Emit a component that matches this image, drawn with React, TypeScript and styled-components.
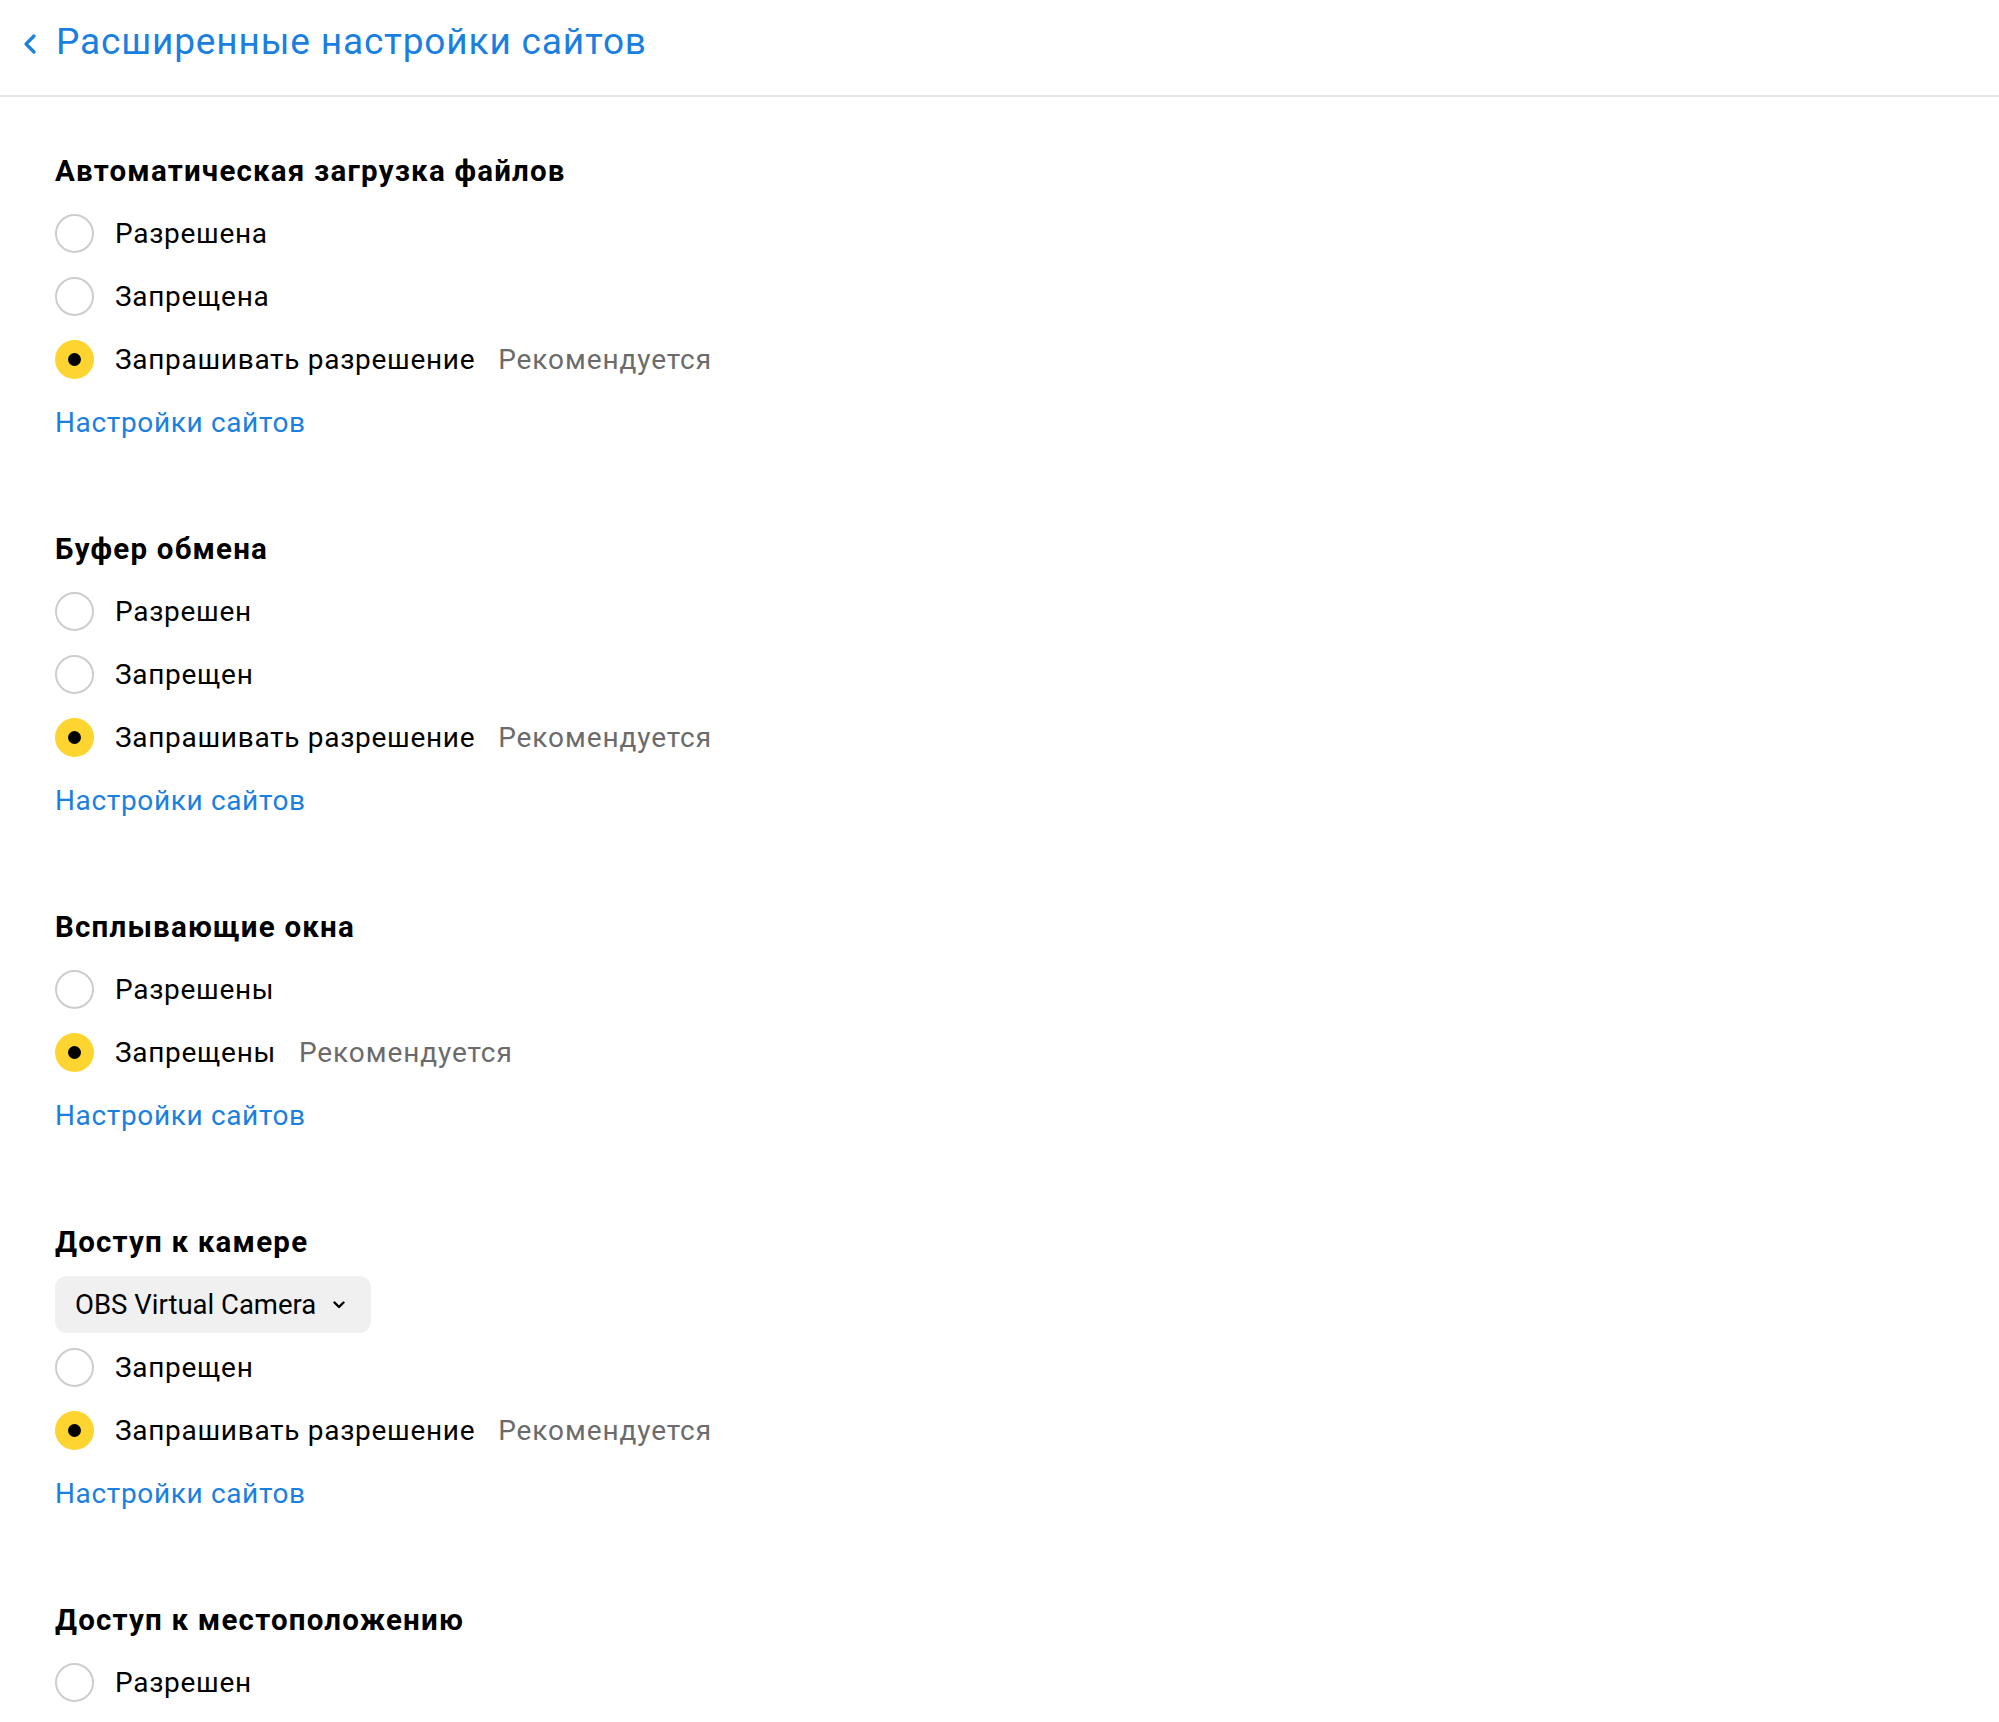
import React from "react";
import styled, { createGlobalStyle } from "styled-components";

const Global = createGlobalStyle`
  html, body { margin: 0; padding: 0; background: #fff; }
  body { font-family: Roboto, "Noto Sans", sans-serif; color: #000; -webkit-font-smoothing: antialiased; }
  * { box-sizing: border-box; }
`;

const Page = styled.div`
  width: 1999px;
  height: 1722px;
  overflow: hidden;
  background: #fff;
`;

const Header = styled.header`
  height: 97px;
  border-bottom: 2px solid #e6e6e6;
  display: flex;
  align-items: flex-start;
  padding: 18px 0 0 21px;
  gap: 17px;
`;

const BackButton = styled.button`
  border: 0;
  background: none;
  padding: 0;
  margin-top: 14px;
  width: 18px;
  height: 24px;
  display: flex;
  cursor: pointer;
`;

const Title = styled.h1`
  margin: 0;
  font-size: 37px;
  font-weight: 400;
  line-height: 48px;
  letter-spacing: 0.85px;
  color: #1a80e0;
`;

const Content = styled.main`
  padding: 42px 0 0 55px;
  display: flex;
  flex-direction: column;
  gap: 63px;
`;

const Section = styled.section`
  display: flex;
  flex-direction: column;
`;

const Heading = styled.h2`
  margin: 0;
  height: 63px;
  display: flex;
  align-items: center;
  font-size: 29.5px;
  font-weight: 700;
  letter-spacing: 1.2px;
  color: #000;
`;

const Row = styled.label`
  height: 63px;
  display: flex;
  align-items: center;
  font-size: 28px;
  letter-spacing: 0.7px;
  cursor: pointer;
`;

const Radio = styled.span<{ $checked?: boolean }>`
  width: 39px;
  height: 39px;
  border-radius: 50%;
  flex: none;
  display: flex;
  align-items: center;
  justify-content: center;
  margin-right: 21px;
  background: ${(p) => (p.$checked ? "#fed530" : "#fff")};
  border: ${(p) => (p.$checked ? "none" : "2px solid #cdcdcd")};
  &::after {
    content: "";
    display: ${(p) => (p.$checked ? "block" : "none")};
    width: 13px;
    height: 13px;
    border-radius: 50%;
    background: #000;
  }
`;

const LabelText = styled.span`
  color: #000;
`;

const Hint = styled.span`
  color: #6b6b6b;
  margin-left: 23px;
  letter-spacing: 0.9px;
`;

const LinkRow = styled.div`
  height: 63px;
  display: flex;
  align-items: center;
`;

const SiteLink = styled.a`
  font-size: 28px;
  letter-spacing: 0.65px;
  color: #1a80e0;
  text-decoration: none;
  cursor: pointer;
`;

const SelectRow = styled.div`
  height: 63px;
  display: flex;
  align-items: center;
`;

const Select = styled.button`
  height: 57px;
  border: 0;
  border-radius: 12px;
  background: #f0f0f0;
  padding: 0 26px 0 20px;
  display: flex;
  align-items: center;
  gap: 17px;
  font-family: inherit;
  font-size: 27.5px;
  color: #000;
  cursor: pointer;
`;

type Option = { label: string; checked?: boolean; hint?: string };
type SectionData = { title: string; select?: string; options: Option[]; link?: boolean };

const sections: SectionData[] = [
  {
    title: "Автоматическая загрузка файлов",
    link: true,
    options: [
      { label: "Разрешена" },
      { label: "Запрещена" },
      { label: "Запрашивать разрешение", checked: true, hint: "Рекомендуется" },
    ],
  },
  {
    title: "Буфер обмена",
    link: true,
    options: [
      { label: "Разрешен" },
      { label: "Запрещен" },
      { label: "Запрашивать разрешение", checked: true, hint: "Рекомендуется" },
    ],
  },
  {
    title: "Всплывающие окна",
    link: true,
    options: [
      { label: "Разрешены" },
      { label: "Запрещены", checked: true, hint: "Рекомендуется" },
    ],
  },
  {
    title: "Доступ к камере",
    link: true,
    select: "OBS Virtual Camera",
    options: [
      { label: "Запрещен" },
      { label: "Запрашивать разрешение", checked: true, hint: "Рекомендуется" },
    ],
  },
  {
    title: "Доступ к местоположению",
    options: [{ label: "Разрешен" }],
  },
];

const Chevron = () => (
  <svg width="18" height="24" viewBox="0 0 18 24" fill="none">
    <path d="M13 4 L5 12 L13 20" stroke="#1a80e0" strokeWidth="3.2" strokeLinecap="round" strokeLinejoin="round" />
  </svg>
);

const SmallChevron = () => (
  <svg width="12" height="8" viewBox="0 0 12 8" fill="none">
    <path d="M1.5 1.5 L6 6 L10.5 1.5" stroke="#000" strokeWidth="2.4" strokeLinecap="round" strokeLinejoin="round" />
  </svg>
);

export default function App() {
  return (
    <Page>
      <Global />
      <Header>
        <BackButton aria-label="Назад">
          <Chevron />
        </BackButton>
        <Title>Расширенные настройки сайтов</Title>
      </Header>
      <Content>
        {sections.map((s) => (
          <Section key={s.title}>
            <Heading>{s.title}</Heading>
            {s.select && (
              <SelectRow>
                <Select>
                  {s.select}
                  <SmallChevron />
                </Select>
              </SelectRow>
            )}
            {s.options.map((o) => (
              <Row key={o.label}>
                <Radio $checked={o.checked} />
                <LabelText>{o.label}</LabelText>
                {o.hint && <Hint>{o.hint}</Hint>}
              </Row>
            ))}
            {s.link && (
              <LinkRow>
                <SiteLink>Настройки сайтов</SiteLink>
              </LinkRow>
            )}
          </Section>
        ))}
      </Content>
    </Page>
  );
}
